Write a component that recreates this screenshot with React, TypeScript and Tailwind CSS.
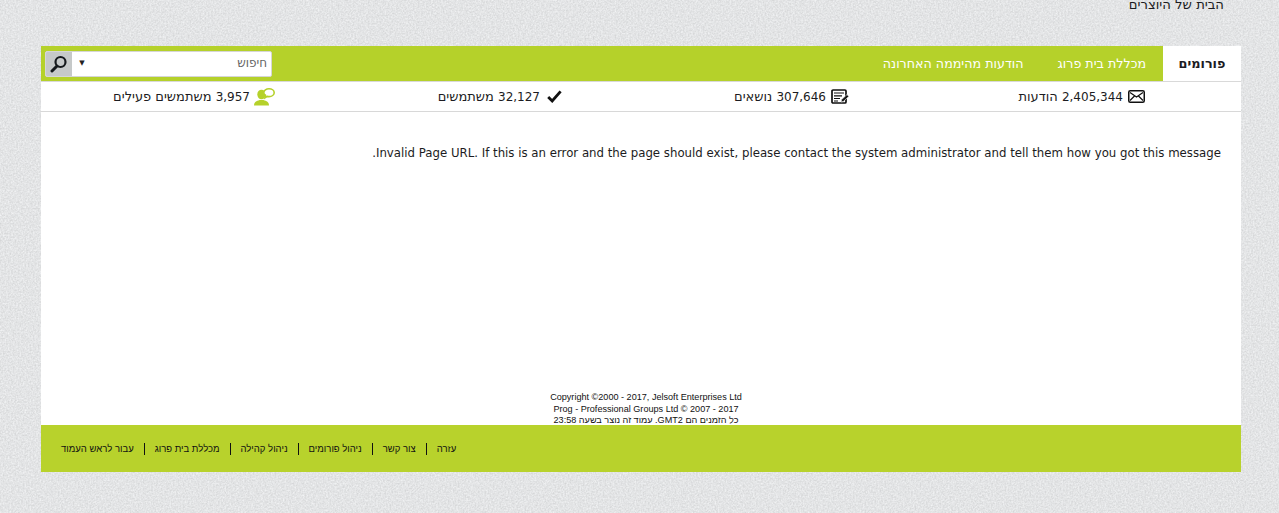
import React from "react";

const links = ["עזרה", "צור קשר", "ניהול פורומים", "ניהול קהילה", "מכללת בית פרוג", "עבור לראש העמוד"];

function MailIcon() {
  return (
    <svg width="17" height="13" viewBox="0 0 17 13" fill="none" stroke="#111" className="shrink-0">
      <rect x="0.75" y="0.75" width="15.5" height="11.5" rx="1.5" strokeWidth="1.5" />
      <path d="M2 2.5 8.500 7 15 2.500M2 10.500 6.500 6M15 10.500 10.500 6" strokeWidth="1.2" />
    </svg>
  );
}

function TopicsIcon() {
  return (
    <svg width="18" height="15" viewBox="0 0 18 15" fill="none" className="shrink-0">
      <rect x="1" y="1" width="14" height="13" rx="1" stroke="#111" strokeWidth="1.7" />
      <path d="M3 4h10M3 6.800h8M3 9.500h6M3 12h4" stroke="#111" strokeWidth="1.2" />
      <path d="m10 13 .6-2.400 5.400-5 1.800 1.800-5.400 5z" fill="#111" stroke="#fff" strokeWidth="0.6" />
    </svg>
  );
}

function CheckIcon() {
  return (
    <svg width="15" height="13" viewBox="0 0 15 13" className="shrink-0">
      <path d="M1.200 7 5.200 11 13.600 1.400" fill="none" stroke="#111" strokeWidth="2.8" />
    </svg>
  );
}

function ActiveIcon() {
  return (
    <svg width="21" height="18" viewBox="0 0 21 18" fill="#b5d12a" className="shrink-0">
      <ellipse cx="7.500" cy="6.500" rx="4.200" ry="4.800" />
      <path d="M0 17.500c0-3.500 2.500-4.500 5.500-5.500h4c3 1 5.500 2 5.500 5.500z" />
      <path d="M15 .8c2.800 0 5.200 1.700 5.200 3.900s-2.400 3.900-5.200 3.900c-.6 0-1.200-.1-1.700-.2l-2.300 1.400.5-2.500C10.400 6.700 9.800 5.700 9.800 4.700 9.800 2.500 12.200.8 15 .8z" fill="#fff" stroke="#b5d12a" strokeWidth="1.6" />
    </svg>
  );
}

function SearchIcon() {
  return (
    <svg width="18" height="18" viewBox="0 0 18 18" fill="none" stroke="#15191c">
      <circle cx="10.500" cy="7" r="5" strokeWidth="2.2" />
      <path d="M7 11 2 16" strokeWidth="3" strokeLinecap="round" />
    </svg>
  );
}

function Stat({ icon, num, label, gap }: { icon: React.ReactNode; num: string; label: string; gap: string }) {
  return (
    <div className={`flex items-center ${gap}`}>
      {icon}
      <span>
        <span className="text-[12px]">{num}</span> {label}
      </span>
    </div>
  );
}

export default function App() {
  return (
    <div
      dir="rtl"
      className="relative h-[513px] overflow-hidden bg-[#e3e4e5] font-['DejaVu_Sans',sans-serif] text-[#1c1c22]"
    >
      {/* paper texture of the page background */}
      <svg className="absolute inset-0 h-full w-full" aria-hidden="true">
        <filter id="paper" colorInterpolationFilters="sRGB" x="0" y="0" width="100%" height="100%">
          <feTurbulence type="fractalNoise" baseFrequency="0.6" numOctaves="2" seed="4" />
          <feColorMatrix values="0.16 0 0 0 0.81 0.16 0 0 0 0.815 0.16 0 0 0 0.82 0 0 0 0 1" />
        </filter>
        <rect width="100%" height="100%" filter="url(#paper)" />
      </svg>

      <div className="relative">
        <div className="h-[46px] pr-[55px] text-[13.2px] leading-[10px]">הבית של היוצרים</div>

        <div className="mr-[38px] w-[1200px]">
          <div className="flex h-[36px] items-stretch border-b border-[#d9d9d9] bg-[#b5d12a]">
            <div className="flex w-[78px] items-center justify-center bg-white text-[12.8px] font-bold">פורומים</div>
            <div className="flex items-center pr-[17px] text-[12.7px] text-white">מכללת בית פרוג</div>
            <div className="flex items-center pr-[34px] text-[12.7px] text-white">הודעות מהיממה האחרונה</div>
            <div className="mr-auto flex items-center pl-[4px]">
              <div className="flex h-[26px] w-[227px] items-stretch overflow-hidden rounded-[2px] border border-[#d6d6d6] bg-white">
                <div className="flex-1 pr-[4px] text-[12px] leading-[23px] text-[#666]">חיפוש</div>
                <div className="flex w-[18px] items-center justify-center pl-[2px] text-[7px] text-[#222]">▼</div>
                <div className="flex w-[26px] items-center justify-center bg-[#c6c9c9]">
                  <SearchIcon />
                </div>
              </div>
            </div>
          </div>

          <div className="grid h-[30px] grid-cols-[296px_287px_287px_1fr] items-center border-b border-[#d8d8d8] bg-white pr-[96px] text-[13px]">
            <Stat gap="gap-[5px]" icon={<MailIcon />} num="2,405,344" label="הודעות" />
            <Stat gap="gap-[5px]" icon={<TopicsIcon />} num="307,646" label="נושאים" />
            <Stat gap="gap-[7px]" icon={<CheckIcon />} num="32,127" label="משתמשים" />
            <Stat gap="gap-[4px]" icon={<ActiveIcon />} num="3,957" label="משתמשים פעילים" />
          </div>

          <div className="h-[313px] bg-white">
            <div className="px-[20px] pt-[33px] text-[11.75px] leading-[16px]">
              Invalid Page URL. If this is an error and the page should exist, please contact the system administrator and tell them how you got this message.
            </div>
            <div className="pl-[10px] pt-[231px] text-center font-['Liberation_Sans',sans-serif] text-[9.1px] leading-[11.5px] text-[#111]">
              <div dir="ltr">Copyright ©2000 - 2017, Jelsoft Enterprises Ltd</div>
              <div dir="ltr">Prog - Professional Groups Ltd © 2007 - 2017</div>
              <div>כל הזמנים הם GMT2. עמוד זה נוצר בשעה 23:58</div>
            </div>
          </div>

          <div className="flex h-[47px] items-center justify-end bg-[#b8d22c] pl-[10px] font-['Liberation_Sans',sans-serif] text-[9.5px] text-[#111]">
            {links.map((l, i) => (
              <span key={l} className={i === 0 ? "px-[10px] leading-[12px]" : "border-r border-[#111] px-[10px] leading-[12px]"}>
                {l}
              </span>
            ))}
          </div>
        </div>
      </div>
    </div>
  );
}
